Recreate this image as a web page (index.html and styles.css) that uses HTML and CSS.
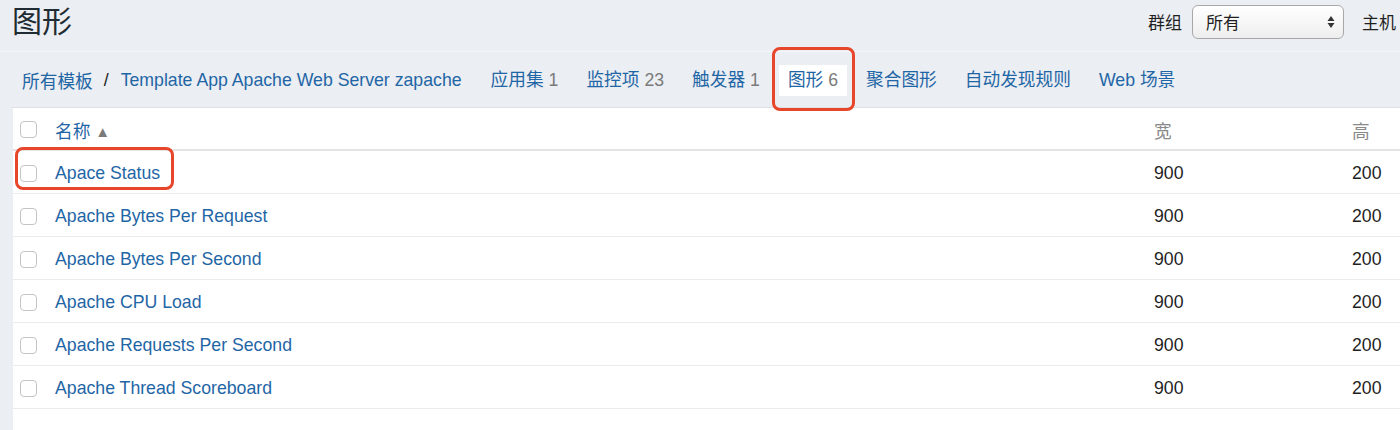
FILE: index.html
```html
<!DOCTYPE html>
<html lang="zh">
<head>
<meta charset="utf-8">
<title>图形</title>
<link rel="stylesheet" href="styles.css">
</head>
<body>
<header class="top">
  <h1 class="title">图形</h1>
  <div class="filters">
    <label class="flabel">群组</label>
    <div class="select"><span>所有</span>
      <svg class="arrows" width="8" height="14" viewBox="0 0 8 14"><path d="M4 1 L7.5 6 H0.5 Z M4 13 L7.5 8 H0.5 Z" fill="#333"/></svg>
    </div>
    <label class="flabel host">主机</label>
  </div>
</header>
<nav class="nav">
  <a class="crumb">所有模板</a><span class="slash">/</span><a class="crumb">Template App Apache Web Server zapache</a>
  <div class="tabs">
    <a class="tab">应用集 <span class="cnt">1</span></a>
    <a class="tab">监控项 <span class="cnt">23</span></a>
    <a class="tab">触发器 <span class="cnt">1</span></a>
    <a class="tab active">图形 <span class="cnt">6</span><span class="mark mark-tab"></span></a>
    <a class="tab">聚合图形</a>
    <a class="tab">自动发现规则</a>
    <a class="tab">Web 场景</a>
  </div>
</nav>
<main class="panel">
  <div class="row head">
    <span class="cell"><span class="cb"></span></span>
    <span class="cell name">名称 <span class="tri">▲</span></span>
    <span class="cell hd">宽</span>
    <span class="cell hd">高</span>
  </div>
  <div class="row">
    <span class="cell"><span class="cb"></span></span>
    <span class="cell name">Apace Status</span>
    <span class="cell">900</span>
    <span class="cell">200</span>
    <span class="mark mark-row"></span>
  </div>
  <div class="row">
    <span class="cell"><span class="cb"></span></span>
    <span class="cell name">Apache Bytes Per Request</span>
    <span class="cell">900</span>
    <span class="cell">200</span>
  </div>
  <div class="row">
    <span class="cell"><span class="cb"></span></span>
    <span class="cell name">Apache Bytes Per Second</span>
    <span class="cell">900</span>
    <span class="cell">200</span>
  </div>
  <div class="row">
    <span class="cell"><span class="cb"></span></span>
    <span class="cell name">Apache CPU Load</span>
    <span class="cell">900</span>
    <span class="cell">200</span>
  </div>
  <div class="row">
    <span class="cell"><span class="cb"></span></span>
    <span class="cell name">Apache Requests Per Second</span>
    <span class="cell">900</span>
    <span class="cell">200</span>
  </div>
  <div class="row">
    <span class="cell"><span class="cb"></span></span>
    <span class="cell name">Apache Thread Scoreboard</span>
    <span class="cell">900</span>
    <span class="cell">200</span>
  </div>
</main>
</body>
</html>
```

FILE: styles.css
```css
* { box-sizing: border-box; }
html, body { margin: 0; padding: 0; }
body {
  background: #ebeef2;
  font-family: "Liberation Sans", Arial, "Noto Sans CJK SC", sans-serif;
  font-size: 17.7px;
  color: #1f1f1f;
  overflow: hidden;
  height: 430px;
}
.top {
  display: flex;
  align-items: center;
  justify-content: space-between;
  height: 52px;
  padding: 0 0 0 12px;
  border-bottom: 1px solid #f5f6f8;
}
.title {
  margin: 0;
  font-size: 30px;
  font-weight: normal;
  color: #1f2c33;
  line-height: 1;
  margin-top: -7px;
}
.filters {
  display: flex;
  align-items: center;
  margin-top: -8px;
  margin-right: 4px;
}
.flabel { color: #1f1f1f; font-size: 17px; }
.select {
  display: flex;
  align-items: center;
  justify-content: space-between;
  width: 152px;
  height: 34px;
  margin: 0 18px 0 10px;
  padding: 0 8px 0 13px;
  border: 1px solid #a8a8a8;
  border-radius: 6px;
  background: linear-gradient(#ffffff, #eeeeee);
  box-shadow: inset 0 1px 0 #fff;
  font-size: 17px;
}
.nav {
  display: flex;
  align-items: center;
  height: 56px;
  margin-left: 12px;
  padding-left: 10px;
  padding-top: 1px;
  border-bottom: 1px solid #dde1e6;
}
.crumb { color: #1f66a6; text-decoration: none; }
.slash { color: #1f1f1f; margin: 0 12px 0 11px; }
.tabs {
  display: flex;
  align-items: center;
  gap: 10px;
  margin-left: 20px;
}
.tab {
  position: relative;
  color: #1f66a6;
  padding: 6px 9px;
  line-height: 19px;
}
.tab.active { background: #ffffff; }
.cnt { color: #7a7a7a; }
.mark {
  position: absolute;
  border: 3px solid #e8462b;
  border-radius: 8px;
  pointer-events: none;
}
.mark-tab { left: -7px; right: -8px; top: -18px; bottom: -15px; }
.panel {
  margin-left: 13px;
  background: #ffffff;
  height: 330px;
}
.row {
  position: relative;
  display: grid;
  grid-template-columns: 42px 1099px 198px 1fr;
  align-items: center;
  height: 43px;
  border-bottom: 1px solid #ebebeb;
}
.row.head {
  height: 43px;
  border-bottom: 2px solid #e4e4e4;
}
.cell { white-space: nowrap; padding-top: 3px; }
.name { color: #1f66a6; }
.hd { color: #8a8a8a; }
.tri { color: #7a7a7a; font-size: 15px; position: relative; top: -1px; }
.cb {
  display: block;
  width: 17px;
  height: 17px;
  margin-left: 7px;
  margin-top: -1px;
  border: 1px solid #c4c4c4;
  border-radius: 4px;
  background: #fff;
}
.mark-row { left: 2px; top: -4px; width: 159px; height: 43px; }
```
